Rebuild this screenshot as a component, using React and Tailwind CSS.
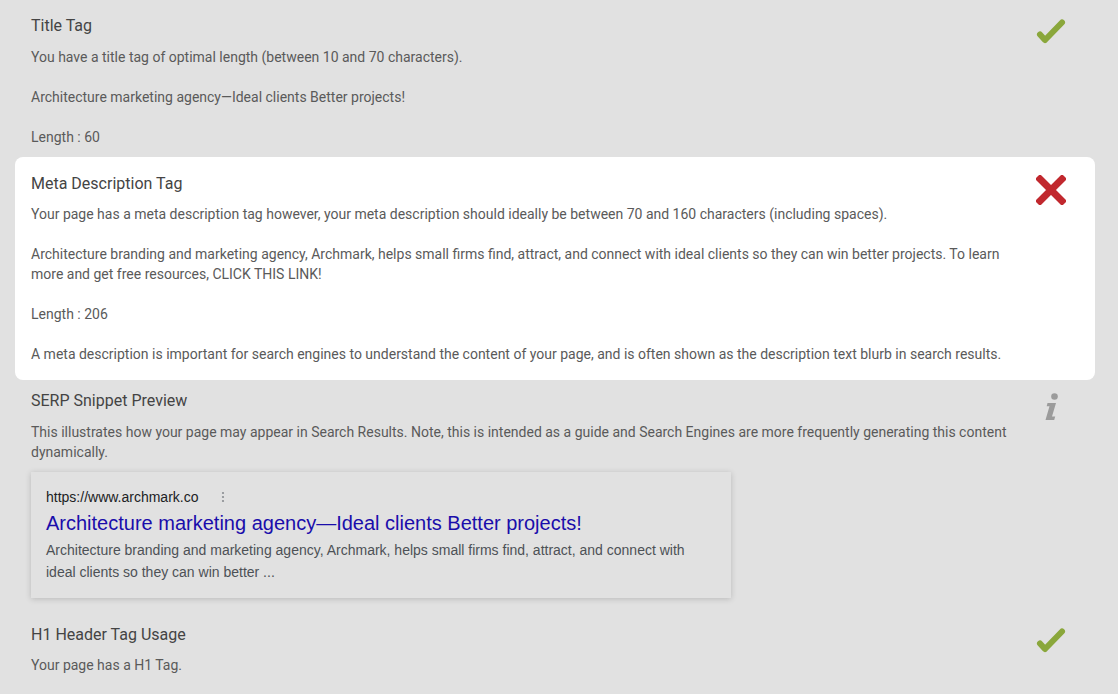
const body = "text-[14px] leading-5 text-[#5a5a5a]"
const heading = "text-[16px] leading-6 text-[#444444]"

function Check() {
  return (
    <svg width="30" height="30" viewBox="0 0 30 30">
      <polyline points="4,17.5 9,23 26,5.5" fill="none" stroke="#8aa73b" strokeWidth="6" strokeLinecap="round" strokeLinejoin="round" />
    </svg>
  )
}

function Cross() {
  return (
    <svg width="30" height="30" viewBox="0 0 30 30">
      <path d="M4 4L26 26M26 4L4 26" stroke="#c1282e" strokeWidth="7" strokeLinecap="square" />
    </svg>
  )
}

function Info() {
  return (
    <svg width="30" height="30" viewBox="0 0 30 30">
      <circle cx="18.5" cy="4.5" r="3.3" fill="#9b9b9b" />
      <path d="M11.5 11h8.5l-4 13.5h3.2l-1 3.5H9.5l4-13.8h-2.8z" fill="#9b9b9b" />
    </svg>
  )
}

function Section({ title, icon, children, className = '' }) {
  return (
    <div className={`flex px-4 ${className}`}>
      <div className="w-[980px]">
        <div className={heading}>{title}</div>
        <div className="mt-[9px]">{children}</div>
      </div>
      <div className="ml-[25px] w-[30px] pt-[3px]">{icon}</div>
    </div>
  )
}

export default function App() {
  return (
    <div className="min-h-screen bg-[#e1e1e1] pl-[15px] pr-[23px] pt-[14px]" style={{ fontFamily: 'Roboto, sans-serif' }}>
      <Section title="Title Tag" icon={<Check />}>
        <div className={body}>
          You have a title tag of optimal length (between 10 and 70 characters).
          <br /><br />
          Architecture marketing agency—Ideal clients Better projects!
          <br /><br />
          Length : 60
        </div>
      </Section>

      <div className="mt-[10px] rounded-lg bg-white pt-[15px] pb-4">
        <Section title="Meta Description Tag" icon={<Cross />} className="[&>div:first-child>div:last-child]:mt-2">
          <div className={body}>
            Your page has a meta description tag however, your meta description should ideally be between 70 and 160 characters (including spaces).
            <br /><br />
            Architecture branding and marketing agency, Archmark, helps small firms find, attract, and connect with ideal clients so they can win better projects. To learn more and get free resources, CLICK THIS LINK!
            <br /><br />
            Length : 206
            <br /><br />
            A meta description is important for search engines to understand the content of your page, and is often shown as the description text blurb in search results.
          </div>
        </Section>
      </div>

      <Section title="SERP Snippet Preview" icon={<Info />} className="mt-[9px]">
        <div className={body}>
          This illustrates how your page may appear in Search Results. Note, this is intended as a guide and Search Engines are more frequently generating this content dynamically.
        </div>
        <div
          className="mt-[10px] w-[700px] bg-[#e1e1e1] px-[15px] pt-[15px] pb-[15px] shadow-[0_1px_6px_rgba(0,0,0,0.18)]"
          style={{ fontFamily: '"Liberation Sans", Arial, sans-serif' }}
        >
          <div className="flex items-center text-[14px] leading-5 text-[#202124]">
            https://www.archmark.co
            <svg className="ml-[22px]" width="4" height="12" viewBox="0 0 4 12">
              <circle cx="2" cy="2" r="1.1" fill="#8a8d91" />
              <circle cx="2" cy="6" r="1.1" fill="#8a8d91" />
              <circle cx="2" cy="10" r="1.1" fill="#8a8d91" />
            </svg>
          </div>
          <div className="mt-[3px] text-[20px] leading-[26px] text-[#1a0dab]">
            Architecture marketing agency—Ideal clients Better projects!
          </div>
          <div className="mt-[3px] text-[14px] leading-[22px] text-[#4d5156]">
            Architecture branding and marketing agency, Archmark, helps small firms find, attract, and connect with ideal clients so they can win better ...
          </div>
        </div>
      </Section>

      <Section title="H1 Header Tag Usage" icon={<Check />} className="mt-[25px] [&>div:first-child>div:last-child]:mt-2">
        <div className={body}>Your page has a H1 Tag.</div>
      </Section>
    </div>
  )
}
